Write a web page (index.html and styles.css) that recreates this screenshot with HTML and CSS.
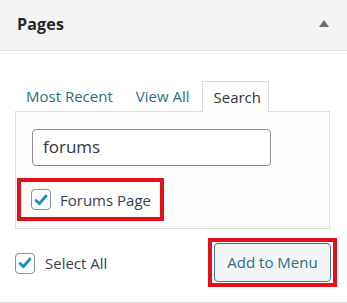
FILE: index.html
```html
<!DOCTYPE html>
<html>
<head>
<meta charset="utf-8">
<link rel="stylesheet" href="styles.css">
</head>
<body>
<div class="panel">
  <div class="header">
    <h3 class="title">Pages</h3>
    <span class="toggle"></span>
  </div>
  <div class="body">
    <ul class="tabs">
      <li class="tab"><a href="#">Most Recent</a></li>
      <li class="tab"><a href="#">View All</a></li>
      <li class="tab active">Search</li>
    </ul>
    <div class="tabpanel">
      <input class="search" type="text" value="forums">
      <label class="item highlight">
        <span class="cb"><svg viewBox="0 0 20 20" width="20" height="20"><path d="M4.5 10.5 L8.3 14 L15.5 5.5" fill="none" stroke="#1e8cbe" stroke-width="3.2" stroke-linecap="round" stroke-linejoin="round"/></svg></span>
        <span class="label">Forums Page</span>
      </label>
    </div>
    <div class="actions">
      <label class="item">
        <span class="cb"><svg viewBox="0 0 20 20" width="20" height="20"><path d="M4.5 10.5 L8.3 14 L15.5 5.5" fill="none" stroke="#1e8cbe" stroke-width="3.2" stroke-linecap="round" stroke-linejoin="round"/></svg></span>
        <span class="label">Select All</span>
      </label>
      <span class="btnwrap"><button class="button">Add to Menu</button></span>
    </div>
  </div>
</div>
</body>
</html>
```
FILE: styles.css
```css
* { box-sizing: border-box; }
html, body { margin: 0; padding: 0; background: #fff; }
body {
  width: 347px;
  height: 303px;
  overflow: hidden;
  font-family: "Open Sans", "Noto Sans", sans-serif;
  color: #32373c;
}
.panel { border-bottom: 1px solid #dcdcde; height: 303px; }
.header {
  height: 51px;
  background: #f4f4f4;
  border-bottom: 1px solid #dcdcde;
  display: flex;
  align-items: center;
  justify-content: space-between;
  padding: 0 18px 2px 17px;
}
.title {
  margin: 0;
  font-size: 16px;
  font-weight: 700;
  color: #23282d;
  letter-spacing: 0.2px;
}
.toggle {
  width: 0;
  height: 0;
  border-left: 5.5px solid transparent;
  border-right: 5.5px solid transparent;
  border-bottom: 7px solid #6b6f73;
  margin-top: -2px;
}
.body { padding: 30px 10px 0 15px; }
.tabs {
  list-style: none;
  margin: 0 7px 0 0;
  padding: 0;
  display: flex;
  height: 30px;
}
.tab {
  font-size: 15px;
  line-height: 28px;
  padding: 1px 0 0 11px;
  margin-right: 12px;
}
.tab a { color: #2a7080; text-decoration: none; }
.tab.active {
  color: #32373c;
  margin-left: 1px;
  padding: 1px 7px 0 10px;
  border: 1px solid #dcdcde;
  border-bottom: none;
  background: #fdfdfd;
  height: 31px;
  position: relative;
  z-index: 1;
}
.tabpanel {
  margin-right: 7px;
  height: 118px;
  border: 1px solid #dcdcde;
  background: #fdfdfd;
  padding: 17px 0 0 0;
}
.search {
  display: block;
  margin-left: 16px;
  width: 239px;
  height: 37px;
  border: 1px solid #8c8f94;
  border-radius: 4px;
  background: #fff;
  font-family: inherit;
  font-size: 17px;
  color: #32373c;
  padding: 0 0 2px 10px;
  outline: none;
}
.item {
  display: flex;
  align-items: center;
  font-size: 15px;
  color: #3c434a;
}
.cb {
  width: 20px;
  height: 21px;
  border: 1px solid #8c8f94;
  border-radius: 4px;
  background: #fff;
  display: flex;
  align-items: center;
  justify-content: center;
  margin-right: 9px;
}
.cb svg { display: block; }
.highlight {
  margin: 12px 0 0 1px;
  width: 147px;
  height: 43px;
  border: 4px solid #e4111a;
  padding-left: 10px;
}
.actions {
  display: flex;
  justify-content: space-between;
  align-items: center;
  margin-top: 9px;
}
.actions .item { margin-top: 1px; }
.actions .cb { margin-right: 10px; }
.btnwrap {
  border: 4px solid #e4111a;
  padding: 1px 2px 1px 2px;
  background: #fff;
}
.button {
  display: block;
  width: 117px;
  height: 39px;
  border: 1px solid #4c7380;
  border-radius: 4px;
  background: #f3f5f6;
  color: #2a7080;
  font-family: inherit;
  font-size: 15px;
  padding: 0 0 2px 0;
}
```
